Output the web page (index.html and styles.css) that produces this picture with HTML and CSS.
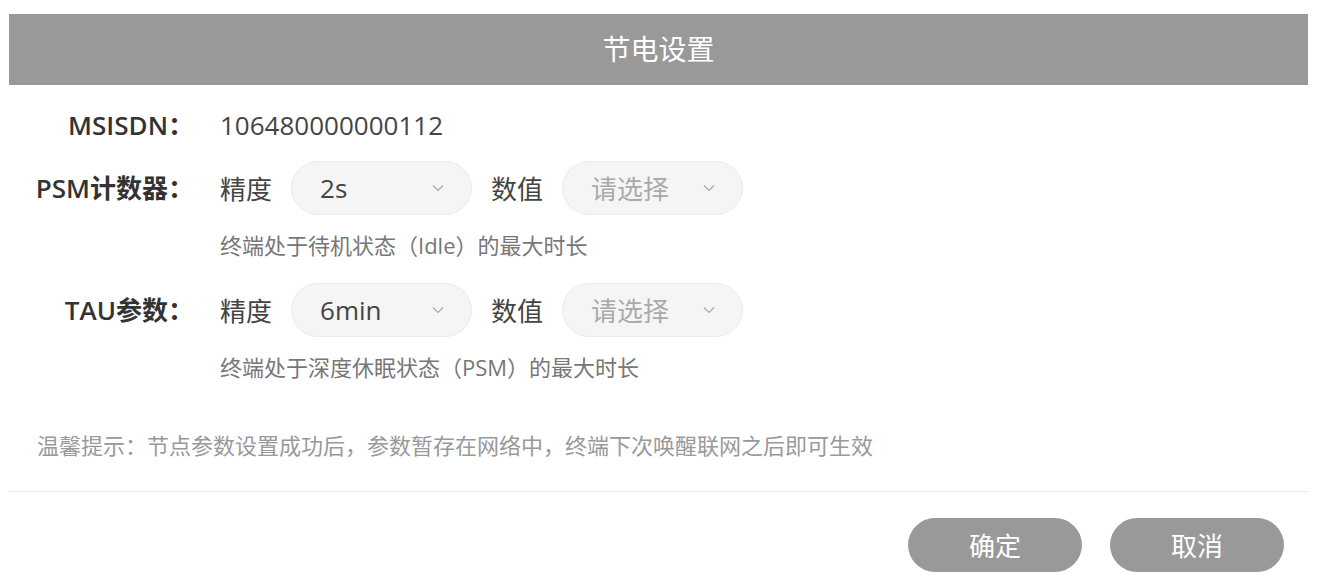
FILE: index.html
```html
<!DOCTYPE html>
<html lang="zh-CN">
<head>
    <meta charset="UTF-8">
    <meta name="viewport" content="width=device-width, initial-scale=1.0">
    <title>节电设置</title>
    <link rel="stylesheet" href="styles.css">
</head>
<body>
    <div class="dialog">
        <div class="dialog-title">节电设置</div>

        <div class="dialog-body">
            <div class="field field-plain">
                <label class="field-label">MSISDN：</label>
                <div class="field-value">106480000000112</div>
            </div>

            <div class="field">
                <label class="field-label">PSM计数器：</label>
                <div class="field-content">
                    <div class="controls">
                        <span class="ctl-label">精度</span>
                        <div class="select">
                            <span class="select-text">2s</span>
                            <svg class="chevron" viewBox="0 0 12 8"><path d="M1 1.5 L6 6.5 L11 1.5"/></svg>
                        </div>
                        <span class="ctl-label">数值</span>
                        <div class="select empty">
                            <span class="select-text">请选择</span>
                            <svg class="chevron" viewBox="0 0 12 8"><path d="M1 1.5 L6 6.5 L11 1.5"/></svg>
                        </div>
                    </div>
                    <p class="hint">终端处于待机状态（Idle）的最大时长</p>
                </div>
            </div>

            <div class="field">
                <label class="field-label">TAU参数：</label>
                <div class="field-content">
                    <div class="controls">
                        <span class="ctl-label">精度</span>
                        <div class="select">
                            <span class="select-text">6min</span>
                            <svg class="chevron" viewBox="0 0 12 8"><path d="M1 1.5 L6 6.5 L11 1.5"/></svg>
                        </div>
                        <span class="ctl-label">数值</span>
                        <div class="select empty">
                            <span class="select-text">请选择</span>
                            <svg class="chevron" viewBox="0 0 12 8"><path d="M1 1.5 L6 6.5 L11 1.5"/></svg>
                        </div>
                    </div>
                    <p class="hint">终端处于深度休眠状态（PSM）的最大时长</p>
                </div>
            </div>

            <p class="tip">温馨提示：节点参数设置成功后，参数暂存在网络中，终端下次唤醒联网之后即可生效</p>
        </div>

        <div class="dialog-footer">
            <button class="btn">确定</button>
            <button class="btn">取消</button>
        </div>
    </div>
</body>
</html>
```

FILE: styles.css
```css
body {
    margin: 0;
    padding: 0;
    background-color: #fff;
    font-family: "Open Sans", "Noto Sans CJK SC", sans-serif;
    color: #333;
}

.dialog {
    width: 1299px;
    margin: 14px 0 0 9px;
}

.dialog-title {
    height: 71px;
    line-height: 71px;
    background-color: #999;
    color: #fff;
    text-align: center;
    font-size: 28px;
}

.dialog-body {
    padding: 22px 0 0 0;
}

.field {
    display: flex;
    align-items: flex-start;
    margin-bottom: 23px;
}

.field-plain {
    margin-bottom: 18px;
}

.field-label {
    width: 185px;
    flex-shrink: 0;
    margin-right: 26px;
    text-align: right;
    font-size: 26px;
    font-weight: 600;
    color: #333;
    line-height: 54px;
}

.field-plain .field-label,
.field-value {
    line-height: 36px;
}

.field-value {
    font-size: 26px;
    color: #444;
}

.controls {
    display: flex;
    align-items: center;
    gap: 19px;
    height: 54px;
}

.ctl-label {
    font-size: 26px;
    color: #444;
}

.select {
    width: 181px;
    height: 54px;
    box-sizing: border-box;
    display: flex;
    align-items: center;
    justify-content: space-between;
    padding: 0 27px 0 28px;
    border: 1px solid #ebebeb;
    border-radius: 27px;
    background-color: #f5f5f5;
}

.select-text {
    font-size: 26px;
    color: #444;
}

.select.empty .select-text {
    color: #aaa;
}

.chevron {
    width: 12px;
    height: 8px;
    fill: none;
    stroke: #aaa;
    stroke-width: 1.2;
}

.hint {
    margin: 15px 0 0 0;
    font-size: 22px;
    line-height: 30px;
    color: #777;
}

.tip {
    margin: 48px 0 0 28px;
    font-size: 22px;
    line-height: 30px;
    color: #999;
}

.dialog-footer {
    margin-top: 31px;
    border-top: 1px solid #e8e8e8;
    padding: 26px 24px 0 0;
    display: flex;
    justify-content: flex-end;
    gap: 28px;
}

.btn {
    width: 174px;
    height: 54px;
    border: none;
    border-radius: 27px;
    background-color: #999;
    color: #fff;
    font-family: inherit;
    font-size: 26px;
    cursor: pointer;
}
```
